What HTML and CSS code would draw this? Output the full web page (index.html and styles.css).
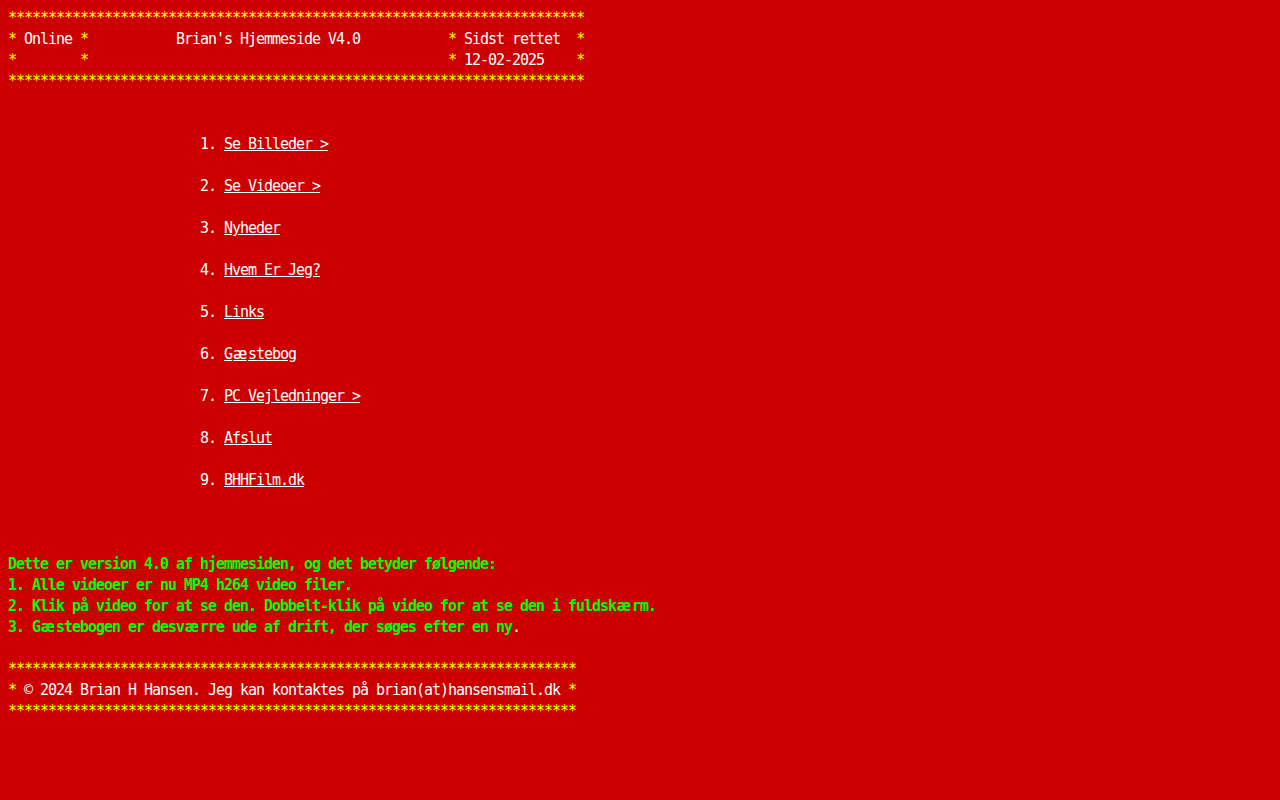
FILE: index.html
```html
<!DOCTYPE html>
<html lang="da">
<head>
    <meta charset="UTF-8">
    <title>Brian's Hjemmeside V4.0</title>
    <link rel="stylesheet" href="styles.css">
</head>
<body>
<pre class="screen"><span class="star">************************************************************************</span>
<span class="star">*</span> Online <span class="star">*</span>           Brian's Hjemmeside V4.0           <span class="star">*</span> Sidst rettet  <span class="star">*</span>
<span class="star">*</span>        <span class="star">*</span>                                             <span class="star">*</span> 12-02-2025    <span class="star">*</span>
<span class="star">************************************************************************</span>


                        1. <a href="#">Se Billeder &gt;</a>

                        2. <a href="#">Se Videoer &gt;</a>

                        3. <a href="#">Nyheder</a>

                        4. <a href="#">Hvem Er Jeg?</a>

                        5. <a href="#">Links</a>

                        6. <a href="#">G<span class="wide">æ</span>stebog</a>

                        7. <a href="#">PC Vejledninger &gt;</a>

                        8. <a href="#">Afslut</a>

                        9. <a href="#">BHHFilm.dk</a>



<span class="news">Dette er version 4.0 af hjemmesiden, og det betyder følgende:
1. Alle videoer er nu MP4 h264 video filer.
2. Klik på video for at se den. Dobbelt-klik på video for at se den i fuldsk<span class="wide">æ</span>rm.
3. G<span class="wide">æ</span>stebogen er desv<span class="wide">æ</span>rre ude af drift, der søges efter en ny</span>.

<span class="star">***********************************************************************</span>
<span class="star">*</span> © 2024 Brian H Hansen. Jeg kan kontaktes på brian(at)hansensmail.dk <span class="star">*</span>
<span class="star">***********************************************************************</span></pre>
</body>
</html>
```

FILE: styles.css
```css
body {
    margin: 8px;
    background: #cc0000;
    color: #ffffff;
}

.screen {
    margin: 0;
    font-family: "DejaVu Sans Mono", "Liberation Mono", monospace;
    font-size: 15px;
    letter-spacing: -1.03px;
    line-height: 21px;
    color: #ffffff;
}

.star {
    color: #ffff00;
}

.screen a {
    color: #ffffff;
    text-decoration: underline;
}

.wide {
    display: inline-block;
    width: 16px;
    text-align: center;
    letter-spacing: 0;
    transform: scaleX(1.5);
}

.screen a .wide {
    text-decoration: underline;
}

.news {
    color: #00ff00;
    font-weight: bold;
}
```
